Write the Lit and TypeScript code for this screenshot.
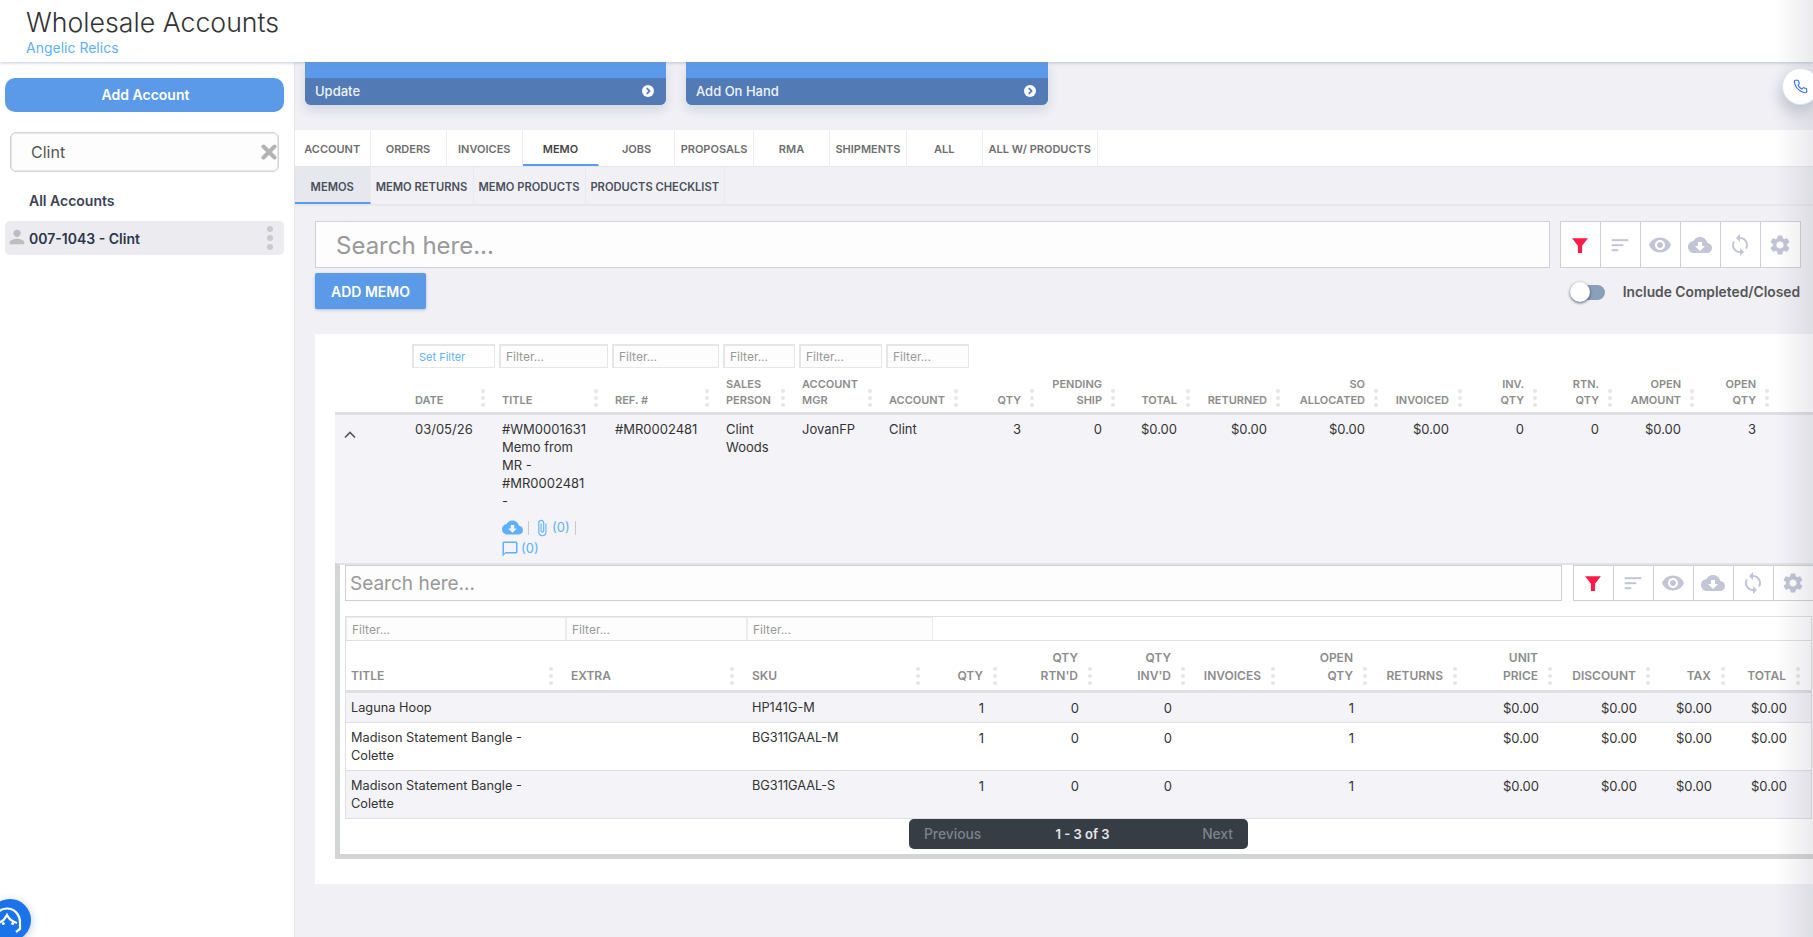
import { LitElement, html, css } from "lit";
import { customElement } from "lit/decorators.js";

const P = {
  eye: "M12 4.5C7 4.5 2.73 7.61 1 12c1.73 4.39 6 7.5 11 7.5s9.27-3.11 11-7.5c-1.73-4.39-6-7.5-11-7.5zM12 17c-2.76 0-5-2.24-5-5s2.24-5 5-5 5 2.24 5 5-2.24 5-5 5zm0-8c-1.66 0-3 1.34-3 3s1.34 3 3 3 3-1.34 3-3-1.34-3-3-3z",
  cloud: "M19.35 10.04C18.67 6.59 15.64 4 12 4 9.11 4 6.6 5.64 5.35 8.04 2.34 8.36 0 10.91 0 14c0 3.31 2.69 6 6 6h13c2.76 0 5-2.24 5-5 0-2.64-2.05-4.78-4.65-4.96zM17 13l-5 5-5-5h3V9h4v4h3z",
  sync: "M12 4V1L8 5l4 4V6c3.31 0 6 2.69 6 6 0 1.01-.25 1.97-.7 2.8l1.46 1.46C19.54 15.03 20 13.57 20 12c0-4.42-3.58-8-8-8zm0 14c-3.31 0-6-2.69-6-6 0-1.01.25-1.97.7-2.8L5.24 7.74C4.46 8.97 4 10.43 4 12c0 4.42 3.58 8 8 8v3l4-4-4-4v3z",
  gear: "M19.14 12.94c.04-.3.06-.61.06-.94 0-.32-.02-.64-.07-.94l2.03-1.58a.49.49 0 0 0 .12-.61l-1.92-3.32a.488.488 0 0 0-.59-.22l-2.39.96c-.5-.38-1.03-.7-1.62-.94l-.36-2.54a.484.484 0 0 0-.48-.41h-3.84c-.24 0-.43.17-.47.41l-.36 2.54c-.59.24-1.13.57-1.62.94l-2.39-.96c-.22-.08-.47 0-.59.22L2.74 8.87c-.12.21-.08.47.12.61l2.03 1.58c-.05.3-.09.63-.09.94s.02.64.07.94l-2.03 1.58a.49.49 0 0 0-.12.61l1.92 3.32c.12.22.37.29.59.22l2.39-.96c.5.38 1.03.7 1.62.94l.36 2.54c.05.24.24.41.48.41h3.84c.24 0 .44-.17.47-.41l.36-2.54c.59-.24 1.13-.56 1.62-.94l2.39.96c.22.08.47 0 .59-.22l1.92-3.32c.12-.22.07-.47-.12-.61l-2.01-1.58zM12 15.6c-1.98 0-3.6-1.62-3.6-3.6s1.62-3.6 3.6-3.6 3.6 1.62 3.6 3.6-1.62 3.6-3.6 3.6z",
  person: "M12 12c2.21 0 4-1.79 4-4s-1.79-4-4-4-4 1.79-4 4 1.79 4 4 4zm0 2c-2.67 0-8 1.34-8 4v2h16v-2c0-2.66-5.33-4-8-4z",
  clip: "M16.5 6v11.5c0 2.21-1.79 4-4 4s-4-1.79-4-4V5c0-1.38 1.12-2.5 2.5-2.5s2.5 1.12 2.5 2.5v10.5c0 .55-.45 1-1 1s-1-.45-1-1V6H10v9.5c0 1.38 1.12 2.5 2.5 2.5s2.5-1.12 2.5-2.5V5c0-2.21-1.79-4-4-4S7 2.79 7 5v12.5c0 3.04 2.46 5.5 5.5 5.5s5.5-2.46 5.5-5.5V6h-1.5z",
  chat: "M20 2H4c-1.1 0-2 .9-2 2v18l4-4h14c1.1 0 2-.9 2-2V4c0-1.1-.9-2-2-2zm0 14H6l-2 2V4h16v12z",
  phone: "M22 16.92v3a2 2 0 0 1-2.18 2 19.79 19.79 0 0 1-8.63-3.07 19.5 19.5 0 0 1-6-6 19.79 19.79 0 0 1-3.07-8.67A2 2 0 0 1 4.11 2h3a2 2 0 0 1 2 1.72 12.84 12.84 0 0 0 .7 2.81 2 2 0 0 1-.45 2.11L8.09 9.91a16 16 0 0 0 6 6l1.27-1.27a2 2 0 0 1 2.11-.45 12.84 12.84 0 0 0 2.81.7A2 2 0 0 1 22 16.92z",
};

const solid = (d: string, cls: string) =>
  html`<svg class=${cls} viewBox="0 0 24 24" fill="currentColor" fill-rule="evenodd"><path d=${d}></path></svg>`;

const toolIcons = () => [
  html`<svg class="ti red" viewBox="0 0 24 24" fill="currentColor"><path d="M2.5 4h19l-7 9v8.5h-5V13z"></path></svg>`,
  html`<svg class="ti" viewBox="0 0 24 24" fill="currentColor"><rect x="2" y="5" width="20" height="2.4"></rect><rect x="2" y="11" width="14" height="2.4"></rect><rect x="2" y="17" width="8" height="2.4"></rect></svg>`,
  solid(P.eye, "ti big"),
  solid(P.cloud, "ti big"),
  solid(P.sync, "ti big"),
  solid(P.gear, "ti big"),
];

const mainHead: [string, string][] = [
  ["", "l"], ["DATE", "l"], ["TITLE", "l"], ["REF. #", "l"], ["SALES\nPERSON", "l"], ["ACCOUNT\nMGR", "l"],
  ["ACCOUNT", "r0"], ["QTY", "r"], ["PENDING\nSHIP", "r"], ["TOTAL", "r"], ["RETURNED", "r"], ["SO\nALLOCATED", "r"],
  ["INVOICED", "r"], ["INV.\nQTY", "r"], ["RTN.\nQTY", "r"], ["OPEN\nAMOUNT", "r"], ["OPEN\nQTY", "r"],
];

const subHead: [string, string][] = [
  ["TITLE", "l"], ["EXTRA", "l"], ["SKU", "l"], ["QTY", "r"], ["QTY\nRTN'D", "r"], ["QTY\nINV'D", "r"], ["INVOICES", "r"],
  ["OPEN\nQTY", "r"], ["RETURNS", "r"], ["UNIT\nPRICE", "r"], ["DISCOUNT", "r"], ["TAX", "r"], ["TOTAL", "r"],
];

const subRows = [
  ["Laguna Hoop", "", "HP141G-M", "1", "0", "0", "", "1", "", "$0.00", "$0.00", "$0.00", "$0.00"],
  ["Madison Statement Bangle - Colette", "", "BG311GAAL-M", "1", "0", "0", "", "1", "", "$0.00", "$0.00", "$0.00", "$0.00"],
  ["Madison Statement Bangle - Colette", "", "BG311GAAL-S", "1", "0", "0", "", "1", "", "$0.00", "$0.00", "$0.00", "$0.00"],
];

@customElement("app-root")
export class AppRoot extends LitElement {
  static styles = css`
    :host { display: block; position: relative; width: 1813px; height: 937px; overflow: hidden; background: #f0f0f5;
      font-family: Inter, "Liberation Sans", sans-serif; color: #333; font-size: 13px; }
    * { box-sizing: border-box; }
    input { font-family: inherit; outline: none; }
    input::placeholder { color: #999; opacity: 1; }

    .header { position: relative; z-index: 3; height: 62px; background: #fff; padding: 5px 26px 0; box-shadow: 0 1px 3px rgba(120,140,170,.45); }
    .header h1 { margin: 0; font-size: 26.7px; line-height: 34px; font-weight: 300; color: #333; }
    .header .sub-title { font-size: 14px; line-height: 16px; color: #5fb0ff; margin-top: 1px; }

    .body { display: flex; height: 875px; }
    .side { width: 295px; flex: none; background: #fff; border-right: 1px solid #e4e4ea; padding: 16px 10px 0 5px; }
    .add-acc { height: 34px; width: 279px; border-radius: 10px; background: #5b9ae8; color: #fff; font-weight: 600; font-size: 14px;
      display: flex; align-items: center; justify-content: center; padding-bottom: 1px; padding-left: 2px; }
    .side-search { position: relative; margin: 20px 0 0 5px; width: 269px; height: 40px; }
    .side-search input { width: 100%; height: 100%; border: 1px solid #d2d2d2; border-radius: 6px; background: #fdfdfd; font-size: 16px; color: #555; padding: 0 30px 0 20px; box-shadow: inset 0 0 0 1px #e8e8e8; }
    .side-search svg { position: absolute; right: 2px; top: 12px; width: 16px; height: 16px; color: #b3b3b3; }
    .all { margin: 20px 0 0 24px; font-size: 14px; line-height: 18px; font-weight: 600; color: #3a4256; }
    .acct { margin-top: 11px; width: 279px; height: 34px; border-radius: 5px; background: #ebebf0; display: flex; align-items: center; color: #2d3748; font-weight: 600; font-size: 14px; position: relative; padding-left: 1px; }
    .acct .pi { width: 22px; height: 22px; color: #bdbdbd; margin-right: 1px; margin-top: -2px; flex: none; }
    .acct .dots { margin-left: auto; margin-right: 11px; display: flex; flex-direction: column; gap: 3px; }
    .acct .dots i { width: 6px; height: 6px; border-radius: 50%; background: #cbcbcb; display: block; }

    .main { flex: 1; min-width: 0; overflow: hidden; }
    .cards { display: flex; gap: 20px; padding-left: 10px; }
    .card { width: 361px; height: 43px; border-radius: 0 0 6px 6px; background: #5b9ae8; padding-top: 16px; box-shadow: 0 5px 12px rgba(60,70,110,.16); }
    .card.wide { width: 362px; }
    .card .bar { height: 27px; background: #527bb5; border-radius: 0 0 6px 6px; color: #eef3fb; font-size: 13px; font-weight: 500; display: flex; align-items: center; justify-content: space-between; padding: 0 12px 2px 10px; }
    .card .bar svg { width: 12px; height: 12px; }

    .tabs { margin-top: 25px; height: 37px; background: #fff; display: flex; border-bottom: 1px solid #e6e6ea; }
    .tab { height: 36px; border-right: 1px solid #ececf0; display: flex; align-items: center; justify-content: center; font-size: 11px; font-weight: 600; color: #6e6e6e; white-space: nowrap; padding-top: 2px; }
    .tab.on { color: #444; border-bottom: 2px solid #5b9ae8; border-right-color: #fff; padding-top: 4px; }
    .subtabs { height: 39px; display: flex; border-bottom: 2px solid #e8e8ec; }
    .stab { height: 37px; border-right: 1px solid #e9e9ee; display: flex; align-items: center; justify-content: center; font-size: 11.2px; font-weight: 600; color: #4a4f5c; white-space: nowrap; padding-top: 2px; }
    .stab.on { background: #e7e7ee; border-bottom: 2px solid #5b9ae8; padding-top: 4px; }

    .w1 { width: 75.5px; } .w2 { width: 76px; } .w3 { width: 76.5px; } .w4 { width: 79px; } .w5 { width: 77px; } .w6 { width: 115.5px; }
    .s2 { width: 103px; } .s3 { width: 112px; } .s4 { width: 139.5px; }

    .tool { display: flex; margin: 15px 12px 0 20px; gap: 10px; height: 47px; }
    .search { flex: 1; min-width: 0; border: 1px solid #cfd0d5; background: #fdfdfd; font-size: 24px; color: #555; padding: 2px 20px 0; }
    .tools { display: flex; flex: none; border: 1px solid #cfd0d5; background: #fff; }
    .tools .c { width: 40px; display: flex; align-items: center; justify-content: center; border-left: 1px solid #cfd0d5; color: #c2c5d6; padding-right: 1px; }
    .tools .c:first-child { border-left: none; width: 39px; }
    .ti { width: 20px; height: 20px; }
    .ti.big { width: 24px; height: 24px; }
    .ti.red { color: #ff1a47; }

    .addrow { margin: 5px 13px 0 20px; height: 36px; display: flex; justify-content: space-between; align-items: center; }
    .addmemo { width: 111px; height: 36px; background: #5b9ae8; color: #fff; font-size: 14px; font-weight: 600; border-radius: 2px; display: flex; align-items: center; justify-content: center; box-shadow: 0 1px 3px rgba(60,70,110,.3); }
    .togg { display: flex; align-items: center; gap: 18px; font-size: 13.8px; font-weight: 600; color: #555; padding-top: 2px; }
    .track { position: relative; width: 35px; height: 15px; }
    .track::before { content: ""; position: absolute; left: 3px; right: 0; top: 0; bottom: 0; border-radius: 8px; background: #8a9fb8; }
    .knob { position: absolute; left: 0; top: -3px; width: 20px; height: 20px; border-radius: 50%; background: #fff; box-shadow: 0 1px 3px rgba(30,50,80,.8); }

    .panel { margin: 25px 0 0 20px; background: #fff; padding: 10px 0 25px 20px; height: 550px; }
    .mfilters { display: grid; grid-template-columns: 76px 87px 113px 111px 76px 87px 87px; height: 24px; }
    .flt { height: 24px; padding-left: 1px; padding-right: 3px; }
    .flt input, .setf { width: 100%; height: 100%; border: 1px solid #e6e6e6; border-width: 2px 1px 1px 2px; background: #fdfdfd; font-size: 12px; padding: 0 5px; color: #555; }
    .flt .setf { color: #5fb0ff; font-size: 11px; display: flex; align-items: center; background: #fff; }

    .mgrid { display: grid; grid-template-columns: 76px 87px 113px 111px 76px 87px 75px 76px 81px 75px 90px 98px 84px 75px 75px 82px 75px 1fr; }
    .mhead { height: 47px; border-bottom: 3px solid #dedfe3; }
    .h { position: relative; display: flex; align-items: flex-end; font-size: 11px; line-height: 16px; font-weight: 600; color: #8c8c8c; white-space: pre-line; padding-bottom: 4px; }
    .h.l { padding-left: 4px; }
    .h.r { justify-content: flex-end; text-align: right; padding-right: 15px; }
    .h.r0 { padding-left: 4px; }
    .grip { position: absolute; right: 2px; bottom: 5px; display: flex; flex-direction: column; gap: 3px; }
    .h.l .grip { right: 13px; }
    .grip i { display: block; width: 4px; height: 4px; border-radius: 50%; background: #e6e6e6; }

    .mrow { height: 148px; background: #f3f3f8; line-height: 18px; color: #333; }
    .mc { padding: 5px 0 0 4px; }
    .mc.r { text-align: right; padding: 5px 15px 0 0; }
    .mc.ttl { padding-right: 25px; }
    .chev { padding: 13px 0 0 8px; }
    .chev svg { width: 14px; height: 14px; color: #555; display: block; }
    .links { color: #5fb0ff; display: flex; flex-wrap: wrap; align-items: center; margin: 7px -25px 0 0; line-height: 21px; }
    .links svg { flex: none; }
    .links .cl { width: 21px; height: 21px; }
    .links .pc { width: 18px; height: 18px; margin: 0 1px 0 -2px; }
    .links .cm { width: 18px; height: 18px; margin-left: -1px; margin-right: 2px; }
    .links .sep { width: 1px; height: 14px; background: #c9c9c9; margin: 0 6px 0 5px; }
    .links .sep.b { margin: 0 0 0 5px; }
    .links .br { flex-basis: 100%; height: 0; }

    .sub { border-left: 5px solid #d3d5d5; border-bottom: 5px solid #d3d5d5; border-top: 2px solid #e2e3e5; padding-left: 5px; height: 296px; }
    .stool { display: flex; height: 36px; gap: 11px; margin-right: -1px; }
    .stool .search { font-size: 19px; padding: 0 4px; }
    .stable { margin: 15px 1px 0 0; border-top: 1px solid #dedfe3; border-left: 1px solid #dedfe3; border-right: 1px solid #dedfe3; }
    .sfilters { display: grid; grid-template-columns: 220px 181px 186px 1fr; height: 24px; border-bottom: 1px solid #dedfe3; }
    .sfilters input { width: 100%; height: 100%; border: 1px solid #ececec; border-width: 1px 1px 0 1px; background: #fdfdfd; font-size: 12px; padding: 0 5px; }
    .sgrid { display: grid; grid-template-columns: 220px 181px 186px 66px 95px 93px 90px 92px 90px 95px 98px 75px 75px 1fr; }
    .shead { height: 52px; border-bottom: 3px solid #dedfe3; }
    .shead .h { font-size: 12px; line-height: 18px; padding-bottom: 5px; }
    .shead .h.l { padding-left: 5px; }
    .shead .h.r { padding-right: 16px; }
    .shead .grip { bottom: 5px; }
    .srow { line-height: 18px; border-bottom: 1px solid #dedfe3; background: #fff; color: #333; padding: 6px 0 5px; font-size: 12.75px; }
    .srow.odd { background: #f3f3f8; }
    .sc { padding-left: 5px; }
    .sc.r { padding: 0 15px 0 0; text-align: right; font-size: 13px; }
    .sc.wr { padding-right: 20px; }
    .pager { margin: 0 0 0 564px; width: 339px; height: 30px; background: #373d45; border-radius: 5px; display: grid; grid-template-columns: 100px 1fr 100px; align-items: center; font-size: 13.8px; font-weight: 500; color: #7c838c; padding: 0 15px; }
    .pager .mid { color: #e6e8ea; text-align: center; font-weight: 600; font-size: 13px; padding-left: 8px; }
    .pager .nx { text-align: right; }

    .fade { position: absolute; z-index: 4; right: 0; top: 0; bottom: 0; width: 38px; pointer-events: none; background: linear-gradient(to right, rgba(90,90,110,0), rgba(90,90,110,.12)); }
    .phone { position: absolute; z-index: 5; left: 1782px; top: 68px; width: 37px; height: 37px; border-radius: 50%; background: #fff; border: 1px solid #d7e4fa; box-shadow: -3px 8px 14px rgba(70,80,110,.22); display: flex; align-items: center; justify-content: center; }
    .phone svg { width: 15px; height: 15px; fill: none; stroke: #3b6fe0; stroke-width: 1.8; margin-left: -1px; }
    .help { position: absolute; z-index: 5; left: -11px; top: 899px; width: 42px; height: 42px; border-radius: 50%; background: #1a73e8; box-shadow: 0 2px 8px rgba(30,60,120,.3); }
    .help svg { width: 42px; height: 42px; display: block; }
  `;

  private head(items: [string, string][]) {
    return items.map(([t, a]) => html`<div class="h ${a}">${t}${t ? html`<span class="grip"><i></i><i></i><i></i></span>` : ""}</div>`);
  }

  render() {
    const tabs: [string, string, boolean][] = [
      ["ACCOUNT", "w1", false], ["ORDERS", "w2", false], ["INVOICES", "w3", false], ["MEMO", "w2", true], ["JOBS", "w2", false],
      ["PROPOSALS", "w4", false], ["RMA", "w2", false], ["SHIPMENTS", "w5", false], ["ALL", "w1", false], ["ALL W/ PRODUCTS", "w6", false],
    ];
    const stabs: [string, string, boolean][] = [["MEMOS", "w1", true], ["MEMO RETURNS", "s2", false], ["MEMO PRODUCTS", "s3", false], ["PRODUCTS CHECKLIST", "s4", false]];
    const circ = html`<svg viewBox="0 0 12 12"><circle cx="6" cy="6" r="6" fill="#fff"></circle><path d="M4.8 3.2 7.5 6 4.8 8.8" fill="none" stroke="#527bb5" stroke-width="1.8"></path></svg>`;
    const mcells = ["03/05/26", null, "#MR0002481", "Clint Woods", "JovanFP", "Clint", "3", "0", "$0.00", "$0.00", "$0.00", "$0.00", "0", "0", "$0.00", "3"];

    return html`
      <div class="header">
        <h1>Wholesale Accounts</h1>
        <div class="sub-title">Angelic Relics</div>
      </div>
      <div class="body">
        <aside class="side">
          <div class="add-acc">Add Account</div>
          <div class="side-search">
            <input value="Clint" />
            <svg viewBox="0 0 16 16"><path d="M2.5 2.5 13.5 13.5M13.5 2.5 2.5 13.5" stroke="currentColor" stroke-width="4" stroke-linecap="round" fill="none"></path></svg>
          </div>
          <div class="all">All Accounts</div>
          <div class="acct">
            ${solid(P.person, "pi")}<span>007-1043 - Clint</span>
            <span class="dots"><i></i><i></i><i></i></span>
          </div>
        </aside>
        <main class="main">
          <div class="cards">
            <div class="card"><div class="bar"><span>Update</span>${circ}</div></div>
            <div class="card wide"><div class="bar"><span>Add On Hand</span>${circ}</div></div>
          </div>
          <div class="tabs">${tabs.map(([t, w, on]) => html`<div class="tab ${w} ${on ? "on" : ""}">${t}</div>`)}</div>
          <div class="subtabs">${stabs.map(([t, w, on]) => html`<div class="stab ${w} ${on ? "on" : ""}">${t}</div>`)}</div>
          <div class="tool">
            <input class="search" placeholder="Search here..." />
            <div class="tools">${toolIcons().map((i) => html`<div class="c">${i}</div>`)}</div>
          </div>
          <div class="addrow">
            <div class="addmemo">ADD MEMO</div>
            <div class="togg"><div class="track"><div class="knob"></div></div><span>Include Completed/Closed</span></div>
          </div>
          <section class="panel">
            <div class="mfilters">
              <div></div>
              <div class="flt"><div class="setf">Set Filter</div></div>
              ${[0, 1, 2, 3, 4].map(() => html`<div class="flt"><input placeholder="Filter..." /></div>`)}
            </div>
            <div class="mgrid mhead">${this.head(mainHead)}</div>
            <div class="mgrid mrow">
              <div class="chev"><svg viewBox="0 0 14 14"><path d="M2 9.5 7 4.5 12 9.5" fill="none" stroke="currentColor" stroke-width="1.6"></path></svg></div>
              ${mcells.map((c, i) => i === 1
                ? html`<div class="mc ttl">
                    #WM0001631 Memo from MR - #MR0002481 -
                    <div class="links">
                      ${solid(P.cloud, "cl")}<span class="sep"></span>${solid(P.clip, "pc")}<span>(0)</span><span class="sep b"></span>
                      <span class="br"></span>
                      ${solid(P.chat, "cm")}<span>(0)</span>
                    </div>
                  </div>`
                : html`<div class="mc ${mainHead[i + 1][1]}">${c}</div>`)}
            </div>
            <div class="sub">
              <div class="stool">
                <input class="search" placeholder="Search here..." />
                <div class="tools">${toolIcons().map((i) => html`<div class="c">${i}</div>`)}</div>
              </div>
              <div class="stable">
                <div class="sfilters">
                  <input placeholder="Filter..." /><input placeholder="Filter..." /><input placeholder="Filter..." /><div></div>
                </div>
                <div class="sgrid shead">${this.head(subHead)}</div>
                ${subRows.map((r, ri) => html`<div class="sgrid srow ${ri % 2 === 0 ? "odd" : ""}">
                  ${r.map((c, i) => html`<div class="sc ${subHead[i][1] === "r" ? "r" : i === 0 ? "wr" : ""}">${c}</div>`)}
                </div>`)}
              </div>
              <div class="pager"><span>Previous</span><span class="mid">1 - 3 of 3</span><span class="nx">Next</span></div>
            </div>
          </section>
        </main>
      </div>
      <div class="fade"></div>
      <div class="phone"><svg viewBox="0 0 24 24"><path d=${P.phone}></path></svg></div>
      <div class="help">
        <svg viewBox="0 0 42 42" fill="none" stroke="#fff" stroke-width="2.2">
          <path d="M5 24C5 15 11 9.5 18 9.5S31 15 31 24v6l-4 3"></path>
          <path d="M9 24c4-1 7-4 9-8 2 4 6 7 10 8"></path>
          <circle cx="14.3" cy="24.5" r="1.5" fill="#fff" stroke="none"></circle>
          <circle cx="23.7" cy="24.5" r="1.5" fill="#fff" stroke="none"></circle>
        </svg>
      </div>
    `;
  }
}
